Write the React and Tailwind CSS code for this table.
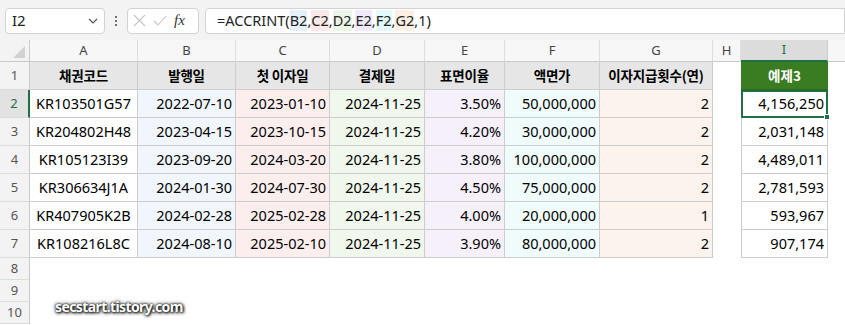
const COLS = "grid grid-cols-[30px_108px_98px_94px_95px_80px_95px_113px_28px_87px_1fr]";

const rows = [
  ["KR103501G57", "2022-07-10", "2023-01-10", "2024-11-25", "3.50%", "50,000,000", "2", "4,156,250"],
  ["KR204802H48", "2023-04-15", "2023-10-15", "2024-11-25", "4.20%", "30,000,000", "2", "2,031,148"],
  ["KR105123I39", "2023-09-20", "2024-03-20", "2024-11-25", "3.80%", "100,000,000", "2", "4,489,011"],
  ["KR306634J1A", "2024-01-30", "2024-07-30", "2024-11-25", "4.50%", "75,000,000", "2", "2,781,593"],
  ["KR407905K2B", "2024-02-28", "2025-02-28", "2024-11-25", "4.00%", "20,000,000", "1", "593,967"],
  ["KR108216L8C", "2024-08-10", "2025-02-10", "2024-11-25", "3.90%", "80,000,000", "2", "907,174"],
];

const heads = ["채권코드", "발행일", "첫 이자일", "결제일", "표면이율", "액면가", "이자지급횟수(연)"];

// background tint per data column B..G
const tints = ["bg-[#f0f6fc]", "bg-[#fdeeee]", "bg-[#f0f8ee]", "bg-[#f6f0fb]", "bg-[#f0fbfb]", "bg-[#fbf3ec]"];

const RowHead = ({ n, h, active }) => (
  <div
    className={`${h} flex items-center justify-center text-[13px] border-b border-[#dcdcdc] ${
      active
        ? "bg-[#e2e2e2] text-[#1e7145] border-r-2 border-r-[#1e7145]"
        : "bg-[#f3f3f3] text-[#555] border-r border-r-[#c9c9c9]"
    }`}
  >
    {n}
  </div>
);

export default function App() {
  return (
    <div className="relative w-[845px] h-[325px] overflow-hidden bg-white font-['Noto_Sans','Noto_Sans_CJK_KR',sans-serif] text-black">
      {/* formula bar */}
      <div className="h-[40px] bg-[#f3f3f3] flex items-center pl-[5px] pt-[1px]">
        <div className="w-[100px] h-[26px] bg-white border border-[#d2d2d2] rounded-[4px] flex items-center justify-between pl-[6px] pr-[6px]">
          <span className="text-[15px] text-[#222]">I2</span>
          <svg width="10" height="6" viewBox="0 0 10 6">
            <path d="M1 1l4 4 4-4" fill="none" stroke="#555" strokeWidth="1.2" />
          </svg>
        </div>
        <div className="w-[22px] flex flex-col items-center gap-[2px]">
          <span className="w-[2px] h-[2px] bg-[#444] rounded-full" />
          <span className="w-[2px] h-[2px] bg-[#444] rounded-full" />
          <span className="w-[2px] h-[2px] bg-[#444] rounded-full" />
        </div>
        <div className="w-[72px] h-[26px] bg-white border border-[#d2d2d2] rounded-[4px] flex items-center px-[5px] gap-[7px]">
          <svg width="13" height="13" viewBox="0 0 13 13">
            <path d="M1 1l11 11M12 1L1 12" stroke="#c4c4c4" strokeWidth="1.1" />
          </svg>
          <svg width="14" height="11" viewBox="0 0 14 11">
            <path d="M1 6l4 4 8-9" fill="none" stroke="#c4c4c4" strokeWidth="1.1" />
          </svg>
          <span className="font-['Liberation_Serif',serif] italic text-[15px] text-[#333] leading-none">fx</span>
        </div>
        <div className="ml-[6px] flex-1 h-[26px] bg-white border border-[#d2d2d2] rounded-l-[4px] flex items-center pl-[11px] text-[14.5px] text-[#222]">
          <span>=ACCRINT(</span>
          <span className="bg-[#e6f0fb]">B2</span>,
          <span className="bg-[#fbe8e8]">C2</span>,
          <span className="bg-[#ebf6e8]">D2</span>,
          <span className="bg-[#f2eafa]">E2</span>,
          <span className="bg-[#e4f9fa]">F2</span>,
          <span className="bg-[#fcf0e5]">G2</span>
          <span>,1)</span>
        </div>
      </div>

      {/* column headers */}
      <div className={`${COLS} h-[22px] text-[13px] text-[#444]`}>
        <div className="bg-[#f3f3f3] border-r border-b border-[#c9c9c9] flex items-end justify-end pr-[4px] pb-[3px]">
          <svg width="12" height="12" viewBox="0 0 12 12">
            <path d="M12 0V12H0Z" fill="#d2d2d2" />
          </svg>
        </div>
        {["A", "B", "C", "D", "E", "F", "G", "H"].map((c) => (
          <div key={c} className="bg-[#f7f7f7] border-r border-b border-r-[#dedede] border-b-[#c9c9c9] flex items-center justify-center">
            {c}
          </div>
        ))}
        <div className="bg-[#dcdcdc] border-r border-[#c9c9c9] border-b-2 border-b-[#1e7145] flex items-center justify-center text-[#1e7145]">
          I
        </div>
        <div className="bg-[#f7f7f7] border-b border-[#c9c9c9]" />
      </div>

      {/* row 1 - table header */}
      <div className={`${COLS} h-[28px]`}>
        <RowHead n="1" h="h-[28px]" />
        {heads.map((t) => (
          <div key={t} className="bg-[#e6e6e6] border-r border-b border-[#cdcdcd] flex items-center justify-center font-['Noto_Sans_CJK_KR',sans-serif] font-bold text-[13.5px] tracking-[-0.2px]">
            {t}
          </div>
        ))}
        <div />
        <div className="bg-[#3a7c22] border-b border-[#2f6a1b] flex items-center justify-center text-white font-['Noto_Sans_CJK_KR',sans-serif] font-bold text-[13.5px]">
          예제3
        </div>
        <div />
      </div>

      {/* data rows */}
      {rows.map((r, i) => (
        <div key={r[0]} className={`${COLS} h-[28px] text-[14.5px]`}>
          <RowHead n={i + 2} h="h-[28px]" active={i === 0} />
          <div className="bg-white border-r border-b border-[#cdcdcd] flex items-center justify-center">{r[0]}</div>
          {r.slice(1, 7).map((v, j) => (
            <div key={j} className={`${tints[j]} border-r border-b border-[#cdcdcd] flex items-center justify-end pr-[3px]`}>
              {v}
            </div>
          ))}
          <div />
          {i === 0 ? (
            <div className="relative bg-white border-2 border-[#1e7145] flex items-center justify-end pr-[2px]">
              {r[7]}
              <span className="absolute -right-[4px] -bottom-[4px] w-[6px] h-[6px] bg-[#1e7145] border border-white" />
            </div>
          ) : (
            <div className="bg-white border-l border-r border-b border-[#cdcdcd] flex items-center justify-end pr-[3px]">{r[7]}</div>
          )}
          <div />
        </div>
      ))}

      {/* empty rows */}
      {[8, 9, 10].map((n) => (
        <div key={n} className={`${COLS} h-[22px]`}>
          <RowHead n={n} h="h-[22px]" />
        </div>
      ))}

      {/* watermark */}
      <div className="absolute left-[55px] top-[296px] text-white font-bold text-[14px] tracking-[-0.6px] font-['Noto_Sans',sans-serif] [text-shadow:0_0_2px_#000,1px_1px_3px_#000,0_0_4px_#333]">
        secstart.tistory.com
      </div>
    </div>
  );
}
